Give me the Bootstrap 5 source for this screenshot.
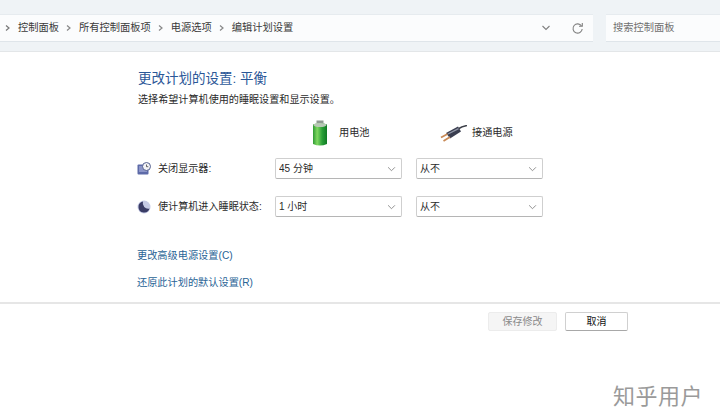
<!DOCTYPE html>
<html lang="zh-CN">

<head>
    <meta charset="UTF-8" />
    <meta name="viewport" content="width=device-width, initial-scale=1.0" />
    <title>编辑计划设置</title>
    <link href="https://cdn.jsdelivr.net/npm/bootstrap@5.3.3/dist/css/bootstrap.min.css" rel="stylesheet">
    <style>
        html, body { height: 420px; overflow: hidden; background: #fff; }
        body { font-family: "Liberation Sans", "Noto Sans CJK SC", sans-serif; font-size: 10px; line-height: 14px; color: #2a2a2a; position: relative; }
        .top-strip { background: #eff3f6; height: 52px; padding-top: 14px; border-bottom: 1px solid #e3e6e8; }
        .bar-row { height: 28px; gap: 13px; }
        .addr-box, .search-box { background: #fbfcfd; height: 28px; border-bottom: 1px solid #dfe5ea; border-top: 1px solid #e6ebef; }
        .addr-box { width: 593px; padding-left: 4px; color: #3a3a3a; font-size: 10.25px; }
        .search-box { flex: 1; padding-left: 7px; color: #707070; font-size: 10.25px; }
        .crumb-sep { width: 9px; margin-right: 5px; }
        .crumb-sep + span { margin-right: 6px; }
        .addr-drop { margin-left: auto; }
        .addr-refresh { margin: 0 9px 0 20px; }
        .main-pane { height: 252px; padding: 18px 0 0 137px; border-bottom: 2px solid #e6e6e6; }
        .plan-title { font-size: 13.5px; line-height: 18px; color: #2b5797; margin: 0 0 5px 1px; font-weight: 400; }
        .plan-sub { font-size: 10.1px; margin: 0 0 0 1px; height: 14px; }
        .head-row { height: 44px; margin: 4px 0 3px; padding-left: 138px; }
        .head-cell { width: 127px; margin-right: 14px; font-size: 10.2px; }
        .head-batt { padding-left: 36px; }
        .head-batt svg { margin-right: 10px; }
        .head-plug { padding-left: 24px; }
        .head-plug svg { margin-right: 5px; }
        .setting-row { height: 21px; margin-bottom: 17px; }
        .row-label { width: 138px; font-size: 10.1px; }
        .row-icon { width: 21px; }
        .win-select { width: 127px; height: 21px; margin-right: 14px; padding: 0 20px 0 3px; font-size: 10px; line-height: 18px; border: 1px solid #cfcfcf; border-bottom-color: #b5b5b5; border-radius: 2px; color: #2a2a2a; background-image: url("data:image/svg+xml,%3csvg xmlns='http://www.w3.org/2000/svg' viewBox='0 0 10 7'%3e%3cpath d='M1 1.500 5 5.500 9 1.500' fill='none' stroke='%23808080' stroke-width='1'/%3e%3c/svg%3e"); background-position: right 5px center; background-size: 9px 6px; box-shadow: none; }
        .link-stack { margin-top: 32px; }
        .link-stack a { display: block; font-size: 10.2px; line-height: 14px; color: #2a6496; text-decoration: none; margin-bottom: 13px; }
        .foot-row { padding: 8px 0 0 488px; gap: 8px; }
        .foot-btn { width: 69px; height: 19px; padding: 0; font-size: 10px; line-height: 17px; border-radius: 2px; }
        .foot-btn:disabled { background: #f5f5f5; border: 1px solid #ececec; color: #8a8a8a; opacity: 1; }
        .btn-cancel { width: 63px; background: #fff; border: 1px solid #d0d0d0; border-bottom-color: #a8a8a8; color: #111; }
        .zhihu-mark { position: absolute; left: 613px; top: 380px; font-size: 22px; line-height: 28px; letter-spacing: .5px; color: #9a9a9a; text-shadow: 0 0 2px #fff; font-family: "Noto Sans CJK SC", sans-serif; font-weight: 400; }
    </style>
</head>

<body>

    <div class="top-strip">
        <div class="d-flex bar-row">
            <div class="addr-box d-flex align-items-center">
                <svg class="crumb-sep" viewBox="0 0 9 10" height="10"><path d="M2 2.500 5 5 2 7.500" fill="none" stroke="#777" stroke-width="1.200"/></svg>
                <span>控制面板</span>
                <svg class="crumb-sep" viewBox="0 0 9 10" height="10"><path d="M2 2.500 5 5 2 7.500" fill="none" stroke="#888" stroke-width="1.200"/></svg>
                <span>所有控制面板项</span>
                <svg class="crumb-sep" viewBox="0 0 9 10" height="10"><path d="M2 2.500 5 5 2 7.500" fill="none" stroke="#888" stroke-width="1.200"/></svg>
                <span>电源选项</span>
                <svg class="crumb-sep" viewBox="0 0 9 10" height="10"><path d="M2 2.500 5 5 2 7.500" fill="none" stroke="#888" stroke-width="1.200"/></svg>
                <span>编辑计划设置</span>
                <svg class="addr-drop" width="10" height="8" viewBox="0 0 10 8"><path d="M1.500 2 5 5.500 8.500 2" fill="none" stroke="#808080" stroke-width="1.100"/></svg>
                <svg class="addr-refresh" width="13" height="13" viewBox="0 0 13 13"><path d="M10.500 4A4.600 4.600 0 1 0 11.200 7" fill="none" stroke="#808080" stroke-width="1.100"/><path d="M8 4.200h3.300V1" fill="none" stroke="#808080" stroke-width="1.100"/></svg>
            </div>
            <div class="search-box d-flex align-items-center">搜索控制面板</div>
        </div>
    </div>

    <div class="main-pane">
        <h1 class="plan-title">更改计划的设置: 平衡</h1>
        <p class="plan-sub">选择希望计算机使用的睡眠设置和显示设置。</p>

        <div class="d-flex head-row">
            <div class="head-cell head-batt d-flex align-items-center">
                <svg width="18" height="27" viewBox="0 0 18 27">
                    <defs><linearGradient id="batt" x1="0" x2="1" y1="0" y2="0"><stop offset="0" stop-color="#2f9a34"/><stop offset=".3" stop-color="#7fd860"/><stop offset=".65" stop-color="#2ba038"/><stop offset="1" stop-color="#0f7a24"/></linearGradient></defs>
                    <rect x="5.500" y="0.500" width="7" height="3" fill="#8f9a92"/>
                    <path d="M2 4.500Q9 2 16 4.500V24Q9 27 2 24Z" fill="url(#batt)"/>
                    <ellipse cx="9" cy="5" rx="6.500" ry="2" fill="#b9c8b6"/>
                </svg>
                <span>用电池</span>
            </div>
            <div class="head-cell head-plug d-flex align-items-center">
                <svg width="27" height="17" viewBox="0 0 27 17">
                    <path d="M18 4Q22 1.500 27 .5" stroke="#3c3f48" stroke-width="1.500" fill="none"/>
                    <path d="M6 8 18 1.500 21 6.500 10 13.500Z" fill="#3a3e50"/>
                    <path d="M8 9 18.500 3.600" stroke="#9298a8" stroke-width="1.300" fill="none"/>
                    <path d="M7.500 9 1 12.500M10 12 3.500 16" stroke="#c98a56" stroke-width="1.800" fill="none"/>
                </svg>
                <span>接通电源</span>
            </div>
        </div>

        <div class="d-flex align-items-center setting-row">
            <div class="row-label d-flex align-items-center">
                <div class="row-icon">
                    <svg width="14" height="14" viewBox="0 0 14 14" class="d-block">
                        <rect x="0.500" y="2.500" width="11" height="10" rx="1" fill="#5d6aa8"/>
                        <rect x="2" y="4" width="8" height="6" fill="#8c95c8"/>
                        <circle cx="9.500" cy="4.500" r="4" fill="#f3f3f6" stroke="#54608f"/>
                        <path d="M9.500 2.500v2.200h1.800" fill="none" stroke="#444" stroke-width=".8"/>
                    </svg>
                </div>
                <span>关闭显示器:</span>
            </div>
            <select class="form-select win-select"><option>45 分钟</option></select>
            <select class="form-select win-select"><option>从不</option></select>
        </div>

        <div class="d-flex align-items-center setting-row">
            <div class="row-label d-flex align-items-center">
                <div class="row-icon">
                    <svg width="14" height="14" viewBox="0 0 14 14" class="d-block">
                        <circle cx="7" cy="7" r="6.500" fill="#c6cbe6"/>
                        <path d="M6 1.500A5.600 5.600 0 1 0 12.500 8.500 5.500 5.500 0 0 1 6 1.500Z" fill="#3a3c66"/>
                    </svg>
                </div>
                <span>使计算机进入睡眠状态:</span>
            </div>
            <select class="form-select win-select"><option>1 小时</option></select>
            <select class="form-select win-select"><option>从不</option></select>
        </div>

        <div class="link-stack">
            <a href="#">更改高级电源设置(C)</a>
            <a href="#">还原此计划的默认设置(R)</a>
        </div>
    </div>

    <div class="d-flex foot-row">
        <button class="btn foot-btn" disabled>保存修改</button>
        <button class="btn foot-btn btn-cancel">取消</button>
    </div>

    <div class="zhihu-mark">知乎用户</div>

    <script src="https://cdn.jsdelivr.net/npm/bootstrap@5.3.3/dist/js/bootstrap.bundle.min.js"></script>
</body>

</html>
